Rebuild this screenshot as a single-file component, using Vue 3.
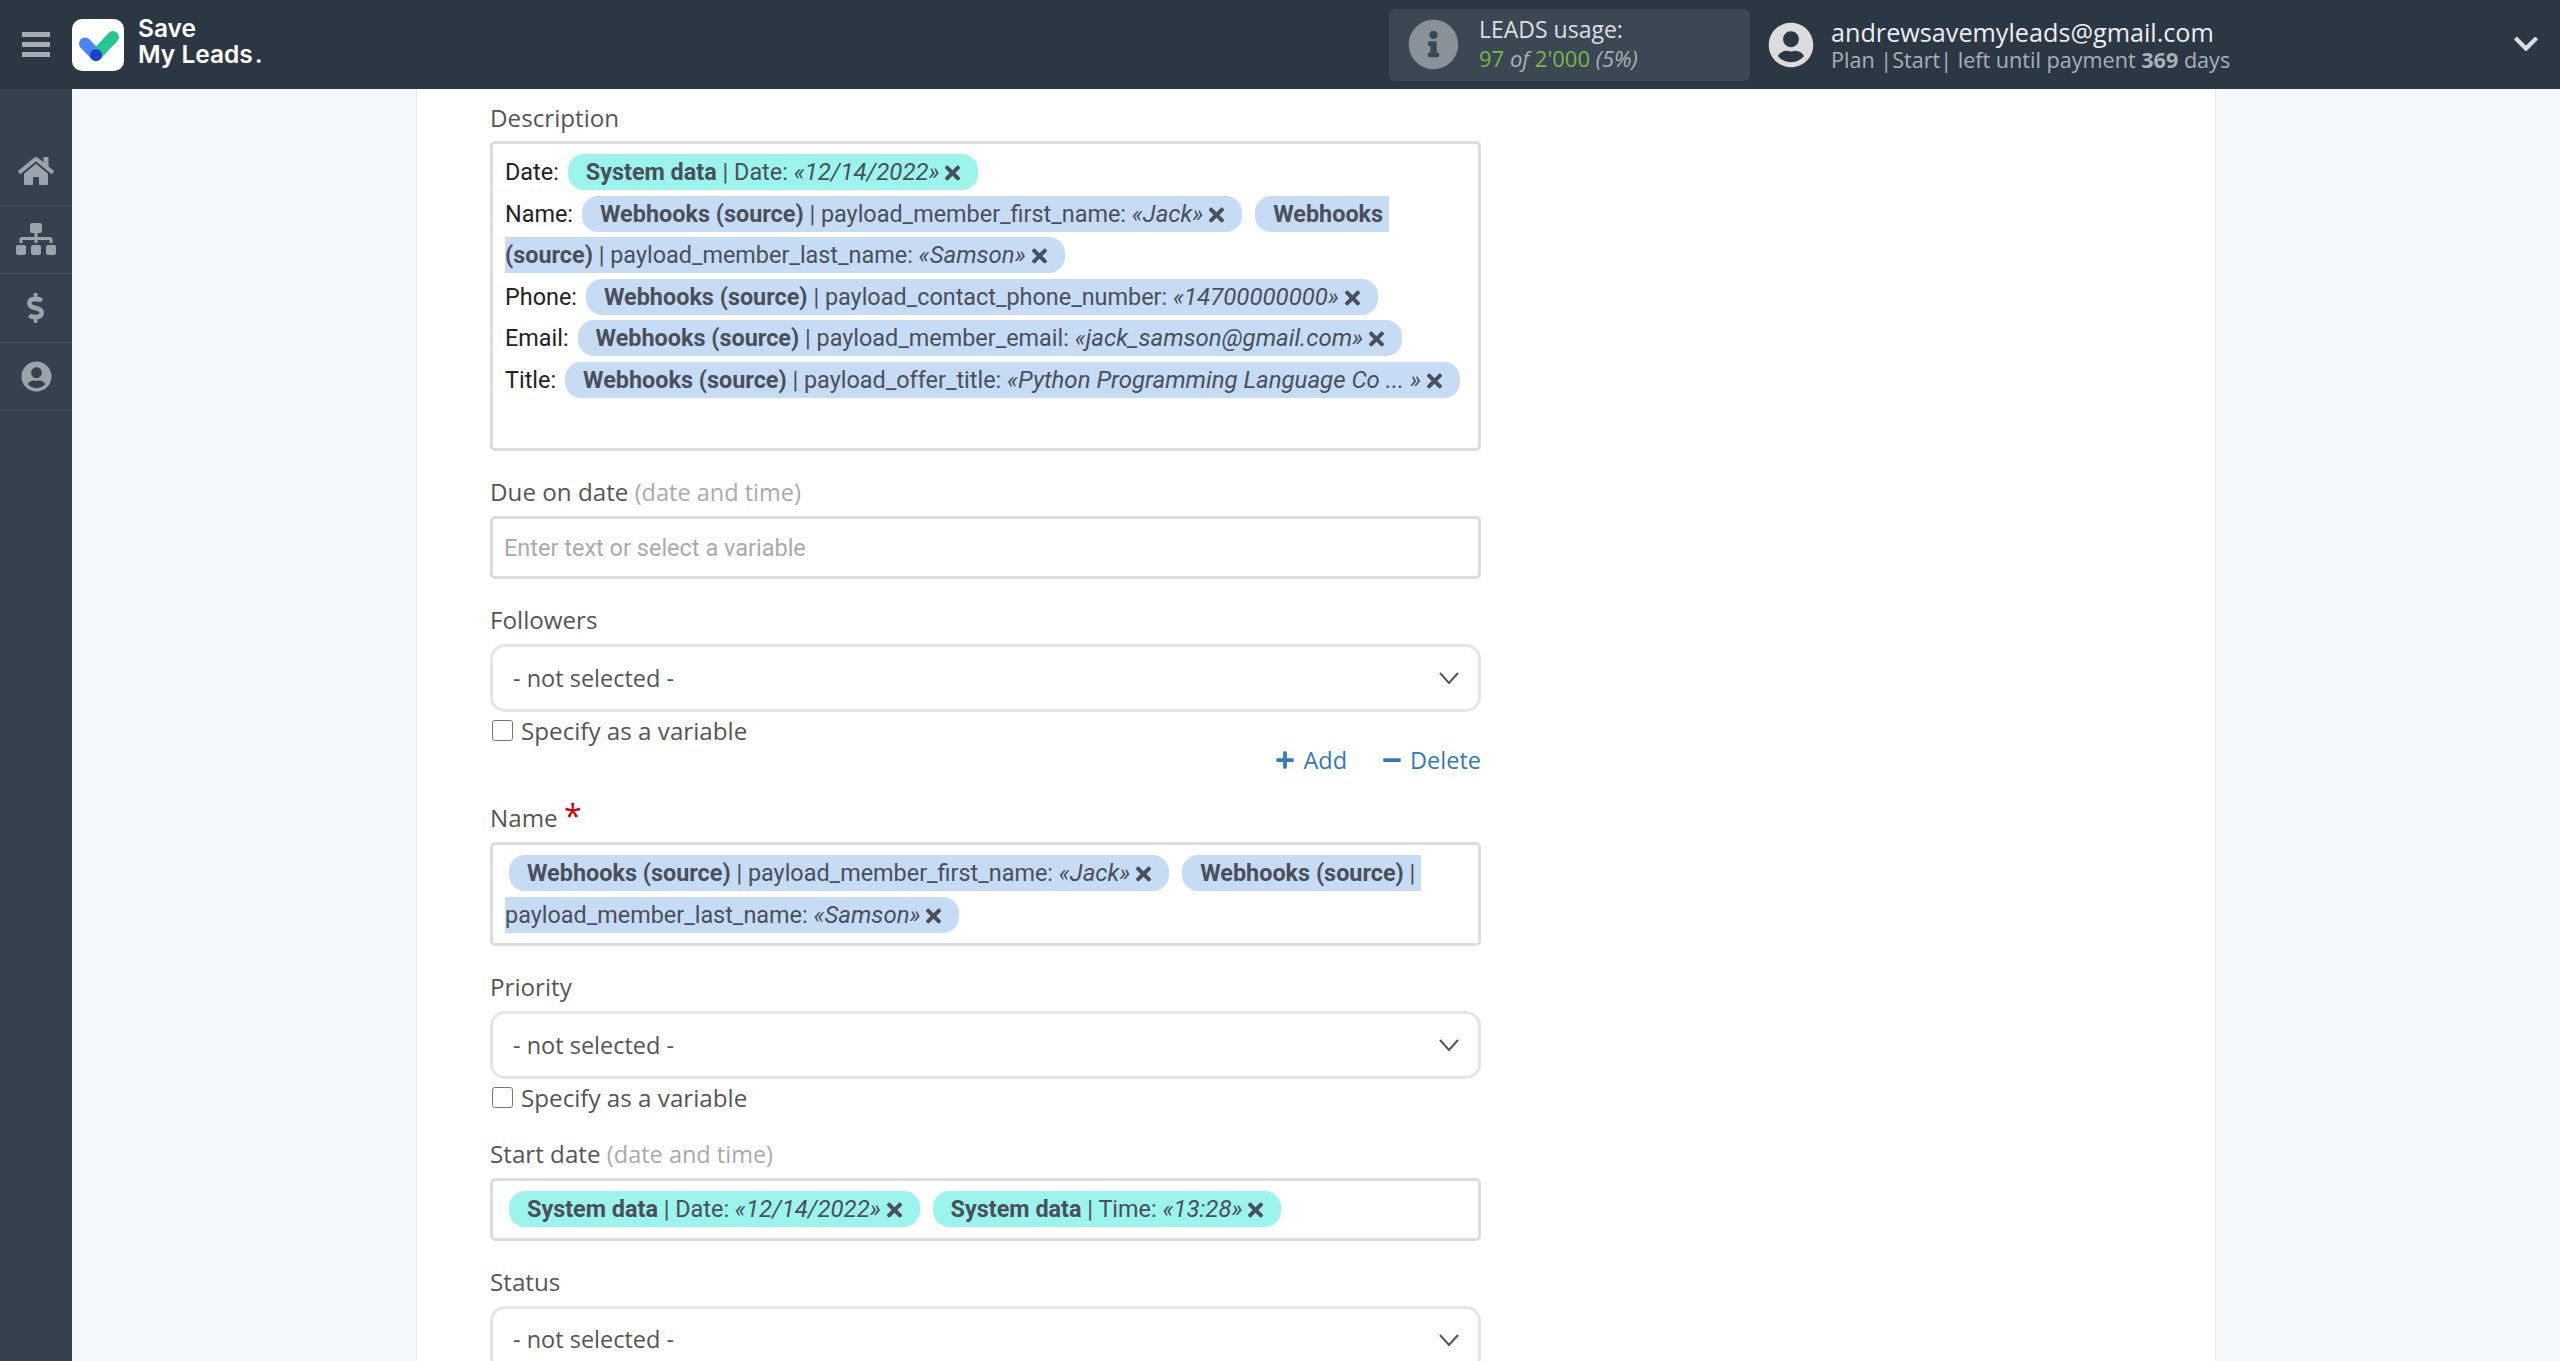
<script setup>
// font awesome 5 paths, drawn by hand since no icon package is available
const icons = {
  home: { box: '0 0 576 512', d: 'M280.37 148.26L96 300.11V464a16 16 0 0 0 16 16l112.06-.29a16 16 0 0 0 15.92-16V368a16 16 0 0 1 16-16h64a16 16 0 0 1 16 16v95.64a16 16 0 0 0 16 16.05L464 480a16 16 0 0 0 16-16V300L295.67 148.26a12.19 12.19 0 0 0-15.3 0zM571.6 251.47L488 182.56V44.05a12 12 0 0 0-12-12h-56a12 12 0 0 0-12 12v72.61L318.47 43a48 48 0 0 0-61 0L4.34 251.47a12 12 0 0 0-1.6 16.9l25.5 31A12 12 0 0 0 45.15 301l235.22-193.74a12.19 12.19 0 0 1 15.3 0L530.9 301a12 12 0 0 0 16.9-1.6l25.5-31a12 12 0 0 0-1.7-16.93z' },
  sitemap: { box: '0 0 640 512', d: 'M128 352H32c-17.67 0-32 14.33-32 32v96c0 17.67 14.33 32 32 32h96c17.67 0 32-14.33 32-32v-96c0-17.67-14.33-32-32-32zm-24-80h192v48h48v-48h192v48h48v-57.59c0-21.17-17.23-38.41-38.41-38.41H344v-64h40c17.67 0 32-14.33 32-32V32c0-17.67-14.33-32-32-32H256c-17.67 0-32 14.33-32 32v96c0 17.67 14.33 32 32 32h40v64H94.41C73.23 224 56 241.23 56 262.41V320h48v-48zm264 80h-96c-17.67 0-32 14.33-32 32v96c0 17.67 14.33 32 32 32h96c17.67 0 32-14.33 32-32v-96c0-17.67-14.33-32-32-32zm240 0h-96c-17.67 0-32 14.33-32 32v96c0 17.67 14.33 32 32 32h96c17.67 0 32-14.33 32-32v-96c0-17.67-14.33-32-32-32z' },
  dollar: { box: '0 0 320 512', d: 'M209.2 233.4l-108-31.6C88.7 198.2 80 186.5 80 173.5c0-16.3 13.2-29.5 29.5-29.5h66.3c12.2 0 24.2 3.7 34.2 10.5 6.1 4.1 14.3 3.1 19.5-2l34.8-34c7.1-6.9 6.1-18.4-1.8-24.5C238 74.8 207.4 64.1 176 64V16c0-8.8-7.2-16-16-16h-32c-8.8 0-16 7.2-16 16v48h-2.5C45.8 64-5.4 118.7.5 183.6c4.2 46.1 39.4 83.6 83.8 96.6l102.5 30c12.5 3.7 21.2 15.3 21.2 28.3 0 16.3-13.2 29.5-29.5 29.5h-66.3C100 368 88 364.3 78 357.5c-6.1-4.1-14.3-3.1-19.5 2l-34.8 34c-7.1 6.9-6.1 18.4 1.8 24.5 24.5 19.2 55.1 29.9 86.5 30v48c0 8.8 7.2 16 16 16h32c8.8 0 16-7.2 16-16v-48.2c46.6-.9 90.3-28.6 105.7-72.7 21.5-61.6-14.6-124.8-72.5-141.7z' },
  user: { box: '0 0 496 512', d: 'M248 8C111 8 0 119 0 256s111 248 248 248 248-111 248-248S385 8 248 8zm0 96c48.6 0 88 39.4 88 88s-39.4 88-88 88-88-39.4-88-88 39.4-88 88-88zm0 344c-58.7 0-111.3-26.6-146.5-68.2 18.8-35.4 55.6-59.8 98.5-59.8 2.4 0 4.8.4 7.1 1.1 13 4.2 26.6 6.9 40.9 6.9 14.3 0 28-2.7 40.9-6.9 2.3-.7 4.7-1.1 7.1-1.1 42.9 0 79.7 24.4 98.5 59.8C359.3 421.4 306.7 448 248 448z' },
  info: { box: '0 0 512 512', d: 'M256 8C119.043 8 8 119.083 8 256c0 136.997 111.043 248 248 248s248-111.003 248-248C504 119.083 392.957 8 256 8zm0 110c23.196 0 42 18.804 42 42s-18.804 42-42 42-42-18.804-42-42 18.804-42 42-42zm56 254c0 6.627-5.373 12-12 12h-88c-6.627 0-12-5.373-12-12v-24c0-6.627 5.373-12 12-12h12v-64h-12c-6.627 0-12-5.373-12-12v-24c0-6.627 5.373-12 12-12h64c6.627 0 12 5.373 12 12v100h12c6.627 0 12 5.373 12 12v24z' },
  chevron: { box: '0 0 448 512', d: 'M207.029 381.476L12.686 187.132c-9.373-9.373-9.373-24.569 0-33.941l22.667-22.667c9.357-9.357 24.522-9.375 33.901-.04L224 284.505l154.745-154.021c9.379-9.335 24.544-9.317 33.901.04l22.667 22.667c9.373 9.373 9.373 24.569 0 33.941L240.971 381.476c-9.373 9.372-24.569 9.372-33.942 0z' },
  times: { box: '0 0 352 512', d: 'M242.72 256l100.07-100.07c12.28-12.28 12.28-32.19 0-44.48l-22.24-22.24c-12.28-12.28-32.19-12.28-44.48 0L176 189.28 75.93 89.21c-12.28-12.28-32.19-12.28-44.48 0L9.21 111.45c-12.28 12.28-12.28 32.19 0 44.48L109.28 256 9.21 356.07c-12.28 12.28-12.28 32.19 0 44.48l22.24 22.24c12.28 12.28 32.2 12.28 44.48 0L176 322.72l100.07 100.07c12.28 12.28 32.2 12.28 44.48 0l22.24-22.24c12.28-12.28 12.28-32.19 0-44.48L242.72 256z' },
  plus: { box: '0 0 448 512', d: 'M416 208H272V64c0-17.67-14.33-32-32-32h-32c-17.67 0-32 14.33-32 32v144H32c-17.67 0-32 14.33-32 32v32c0 17.67 14.33 32 32 32h144v144c0 17.67 14.33 32 32 32h32c17.67 0 32-14.33 32-32V304h144c17.67 0 32-14.33 32-32v-32c0-17.67-14.33-32-32-32z' },
  minus: { box: '0 0 448 512', d: 'M416 208H32c-17.67 0-32 14.33-32 32v32c0 17.67 14.33 32 32 32h384c17.67 0 32-14.33 32-32v-32c0-17.67-14.33-32-32-32z' }
}

const navItems = ['home', 'sitemap', 'dollar', 'user']

const first = { src: 'Webhooks (source)', field: 'payload_member_first_name', value: '«Jack»' }
const last = { src: 'Webhooks (source)', field: 'payload_member_last_name', value: '«Samson»' }
const sysDate = { sys: true, src: 'System data', field: 'Date', value: '«12/14/2022»' }
const sysTime = { sys: true, src: 'System data', field: 'Time', value: '«13:28»' }

const descriptionRows = [
  { label: 'Date:', chips: [sysDate] },
  { label: 'Name:', chips: [first, last] },
  { label: 'Phone:', chips: [{ src: 'Webhooks (source)', field: 'payload_contact_phone_number', value: '«14700000000»' }] },
  { label: 'Email:', chips: [{ src: 'Webhooks (source)', field: 'payload_member_email', value: '«jack_samson@gmail.com»' }] },
  { label: 'Title:', chips: [{ src: 'Webhooks (source)', field: 'payload_offer_title', value: '«Python Programming Language Co ... »' }] }
]
</script>

<template>
  <div class="page">
    <!-- Top bar -->
    <header class="topbar">
      <div class="burger"><span></span><span></span><span></span></div>
      <div class="logo-box">
        <svg viewBox="0 0 52 52" width="52" height="52">
          <path d="M13 24.5L24 36" stroke="#4a84fa" stroke-width="12" stroke-linecap="round" fill="none" />
          <path d="M24 36L41 18" stroke="#24c78d" stroke-width="12" stroke-linecap="round" fill="none" />
          <circle cx="24" cy="36" r="6" fill="#1e3fd6" />
        </svg>
      </div>
      <div class="logo-text">Save<br />My Leads<span class="logo-dot">.</span></div>

      <div class="usage">
        <svg class="usage-icon" :viewBox="icons.info.box"><path :d="icons.info.d" /></svg>
        <div class="usage-text">
          <div class="usage-title">LEADS usage:</div>
          <div class="usage-count">
            <span class="green">97</span> <i>of</i> <span class="green">2'000</span> <i>(5%)</i>
          </div>
        </div>
      </div>

      <div class="account">
        <svg class="account-icon" :viewBox="icons.user.box"><path :d="icons.user.d" /></svg>
        <div>
          <div class="account-mail">andrewsavemyleads@gmail.com</div>
          <div class="account-plan">Plan |Start| left until payment <b>369</b> days</div>
        </div>
      </div>
      <svg class="account-caret" :viewBox="icons.chevron.box"><path :d="icons.chevron.d" /></svg>
    </header>

    <div class="body">
      <!-- Sidebar -->
      <nav class="sidebar">
        <a v-for="item in navItems" :key="item" class="nav-item">
          <svg :class="'nav-' + item" :viewBox="icons[item].box"><path :d="icons[item].d" /></svg>
        </a>
      </nav>

      <main class="main">
        <div class="card">
          <div class="form">
            <!-- Description -->
            <label class="field-label field-first">Description</label>
            <div class="tag-box tag-box-tall">
              <div v-for="row in descriptionRows" :key="row.label" class="tag-row">
                <span class="row-label">{{ row.label }}</span>
                <span v-for="(c, i) in row.chips" :key="i" :class="['chip', { 'chip-sys': c.sys }]"><b>{{ c.src }}</b> | {{ c.field }}: <i>{{ c.value }}</i> <svg class="chip-x" :viewBox="icons.times.box"><path :d="icons.times.d" /></svg></span>
              </div>
            </div>

            <label class="field-label">Due on date <span class="hint">(date and time)</span></label>
            <input class="text-input" type="text" placeholder="Enter text or select a variable" />

            <label class="field-label">Followers</label>
            <div class="select">
              <span>- not selected -</span>
              <svg class="select-arrow" viewBox="0 0 20 12"><path d="M1 1l9 10 9-10" /></svg>
            </div>
            <label class="check-row"><input type="checkbox" /> Specify as a variable</label>
            <div class="add-row">
              <a class="add-link"><svg :viewBox="icons.plus.box"><path :d="icons.plus.d" /></svg>Add</a>
              <a class="add-link"><svg :viewBox="icons.minus.box"><path :d="icons.minus.d" /></svg>Delete</a>
            </div>

            <label class="field-label field-after-add">Name <span class="required">*</span></label>
            <div class="tag-box">
              <div class="tag-row">
                <span v-for="(c, i) in [first, last]" :key="i" class="chip"><b>{{ c.src }}</b> | {{ c.field }}: <i>{{ c.value }}</i> <svg class="chip-x" :viewBox="icons.times.box"><path :d="icons.times.d" /></svg></span>
              </div>
            </div>

            <label class="field-label">Priority</label>
            <div class="select">
              <span>- not selected -</span>
              <svg class="select-arrow" viewBox="0 0 20 12"><path d="M1 1l9 10 9-10" /></svg>
            </div>
            <label class="check-row check-row-last"><input type="checkbox" /> Specify as a variable</label>

            <label class="field-label">Start date <span class="hint">(date and time)</span></label>
            <div class="tag-box">
              <div class="tag-row">
                <span v-for="(c, i) in [sysDate, sysTime]" :key="i" class="chip chip-sys"><b>{{ c.src }}</b> | {{ c.field }}: <i>{{ c.value }}</i> <svg class="chip-x" :viewBox="icons.times.box"><path :d="icons.times.d" /></svg></span>
              </div>
            </div>

            <label class="field-label">Status</label>
            <div class="select">
              <span>- not selected -</span>
              <svg class="select-arrow" viewBox="0 0 20 12"><path d="M1 1l9 10 9-10" /></svg>
            </div>
          </div>
        </div>
      </main>
    </div>
  </div>
</template>

<style>
html,
body {
  margin: 0;
  height: 100%;
  overflow: hidden;
}
</style>

<style scoped>
.page {
  height: 1361px;
  display: flex;
  flex-direction: column;
  overflow: hidden;
  font-family: "Open Sans", sans-serif;
}

/* Top bar */
.topbar {
  flex: 0 0 89px;
  display: flex;
  align-items: center;
  background: #2c3744;
  color: #fff;
}

.burger {
  width: 72px;
  display: flex;
  flex-direction: column;
  align-items: center;
  gap: 5px;
}

.burger span {
  width: 28px;
  height: 5px;
  background: #a7acb2;
}

.logo-box {
  width: 52px;
  height: 52px;
  background: #fff;
  border-radius: 10px;
}

.logo-text {
  margin: -8px 0 0 14px;
  font-family: Inter, sans-serif;
  font-weight: 600;
  font-size: 24.5px;
  line-height: 26px;
}

.logo-dot {
  margin-left: 2px;
}

.usage {
  margin-left: auto;
  width: 361px;
  height: 72px;
  box-sizing: border-box;
  display: flex;
  align-items: center;
  padding-left: 19px;
  gap: 20px;
  background: #3b4853;
  border-radius: 6px;
}

.usage-icon {
  width: 51px;
  height: 51px;
  fill: #899298;
}

.usage-text {
  margin-top: -3px;
}

.usage-title {
  font-size: 23px;
  line-height: 29px;
  color: #dcdfe2;
}

.usage-count {
  font-size: 22px;
  line-height: 28px;
  color: #a9b0b6;
}

.green {
  color: #7ab648;
}

.account {
  margin-left: 18px;
  width: 792px;
  display: flex;
  align-items: center;
  gap: 17px;
}

.account-icon {
  width: 46px;
  height: 46px;
  fill: #dcdcdc;
}

.account-mail {
  font-size: 25.2px;
  line-height: 30px;
  color: #eceef0;
}

.account-plan {
  font-size: 21.6px;
  line-height: 26px;
  color: #a9b0b6;
}

.account-caret {
  position: absolute;
  top: 30px;
  right: 22px;
  width: 24px;
  height: 28px;
  fill: #dcdcdc;
}

/* Sidebar */
.body {
  flex: 1;
  min-height: 0;
  display: flex;
}

.sidebar {
  flex: 0 0 72px;
  padding-top: 48px;
  background: #35414f;
}

.nav-item {
  height: 68.5px;
  display: flex;
  align-items: center;
  justify-content: center;
  border-bottom: 1px solid #47525f;
  box-sizing: border-box;
}

.nav-item svg {
  fill: #9ca3a9;
}

.nav-home {
  width: 36px;
  height: 32px;
}

.nav-sitemap {
  width: 40px;
  height: 32px;
}

.nav-dollar {
  width: 19px;
  height: 30px;
}

.nav-user {
  width: 31px;
  height: 31px;
}

/* Form column */
.main {
  flex: 1;
  min-width: 0;
  background: #f4f7fc;
}

.card {
  width: 1800px;
  height: 100%;
  box-sizing: border-box;
  margin: 0 auto;
  padding: 12px 0 0 73px;
  background: #fff;
  border-left: 1px solid #e8e8e8;
  border-right: 1px solid #e8e8e8;
}

.form {
  width: 991px;
}

.field-label {
  display: block;
  height: 34px;
  margin-bottom: 7px;
  font-size: 24.2px;
  line-height: 34px;
  color: #555;
}

.field-first {
  margin-bottom: 6px;
}

.field-after-add {
  margin-top: 25px;
}

.hint {
  font-size: 23.5px;
  color: #aaa;
}

.required {
  color: #c00;
  font-size: 32px;
  line-height: 20px;
  vertical-align: -1px;
}

.tag-box {
  box-sizing: border-box;
  margin-bottom: 24px;
  padding: 8px 12px 7px;
  border: 3px solid #ddd;
  border-radius: 5px;
  font-family: Roboto, sans-serif;
  font-size: 23.4px;
  line-height: 41.5px;
  color: #222;
}

.tag-box-tall {
  height: 310px;
}

.row-label {
  margin-right: 5px;
}

.chip {
  margin: 0 9px 0 4px;
  padding: 4px 18px;
  border-radius: 16px;
  background: #c6dcf5;
  color: #4a4f5a;
  white-space: pre-wrap;
}

.chip:last-child {
  margin-right: 0;
}

.chip i {
  font-size: 24px;
}

.chip-sys {
  background: #9cf5ec;
}

.chip-x {
  width: 15px;
  height: 22px;
  vertical-align: -4px;
  fill: #4a4f5a;
}

.text-input {
  display: block;
  box-sizing: border-box;
  width: 100%;
  height: 63px;
  margin-bottom: 24px;
  padding: 0 11px;
  border: 3px solid #ddd;
  border-radius: 5px;
  outline: none;
  font-family: Roboto, sans-serif;
  font-size: 23.5px;
  color: #555;
}

.text-input::placeholder {
  color: #aaa;
}

.select {
  box-sizing: border-box;
  height: 68px;
  display: flex;
  align-items: center;
  justify-content: space-between;
  padding: 0 19px 0 20px;
  border: 3px solid #e5e5e5;
  border-radius: 15px;
  font-size: 23.5px;
  color: #555;
}

.select span {
  margin-top: -1px;
}

.select-arrow {
  width: 20px;
  height: 12px;
  fill: none;
  stroke: #555;
  stroke-width: 2;
}

.check-row {
  display: flex;
  align-items: center;
  height: 28px;
  margin-top: 4px;
  font-size: 24.2px;
  color: #555;
  gap: 8px;
}

.check-row input {
  width: 21px;
  height: 21px;
  margin: 0 0 0 2px;
}

.check-row-last {
  margin-bottom: 26px;
}

.add-row {
  height: 32px;
  display: flex;
  justify-content: flex-end;
  align-items: center;
  gap: 36px;
}

.add-link {
  display: flex;
  align-items: center;
  gap: 9px;
  font-size: 23.5px;
  color: #337ab7;
}

.add-link svg {
  width: 18px;
  height: 20px;
  fill: #337ab7;
}
</style>
